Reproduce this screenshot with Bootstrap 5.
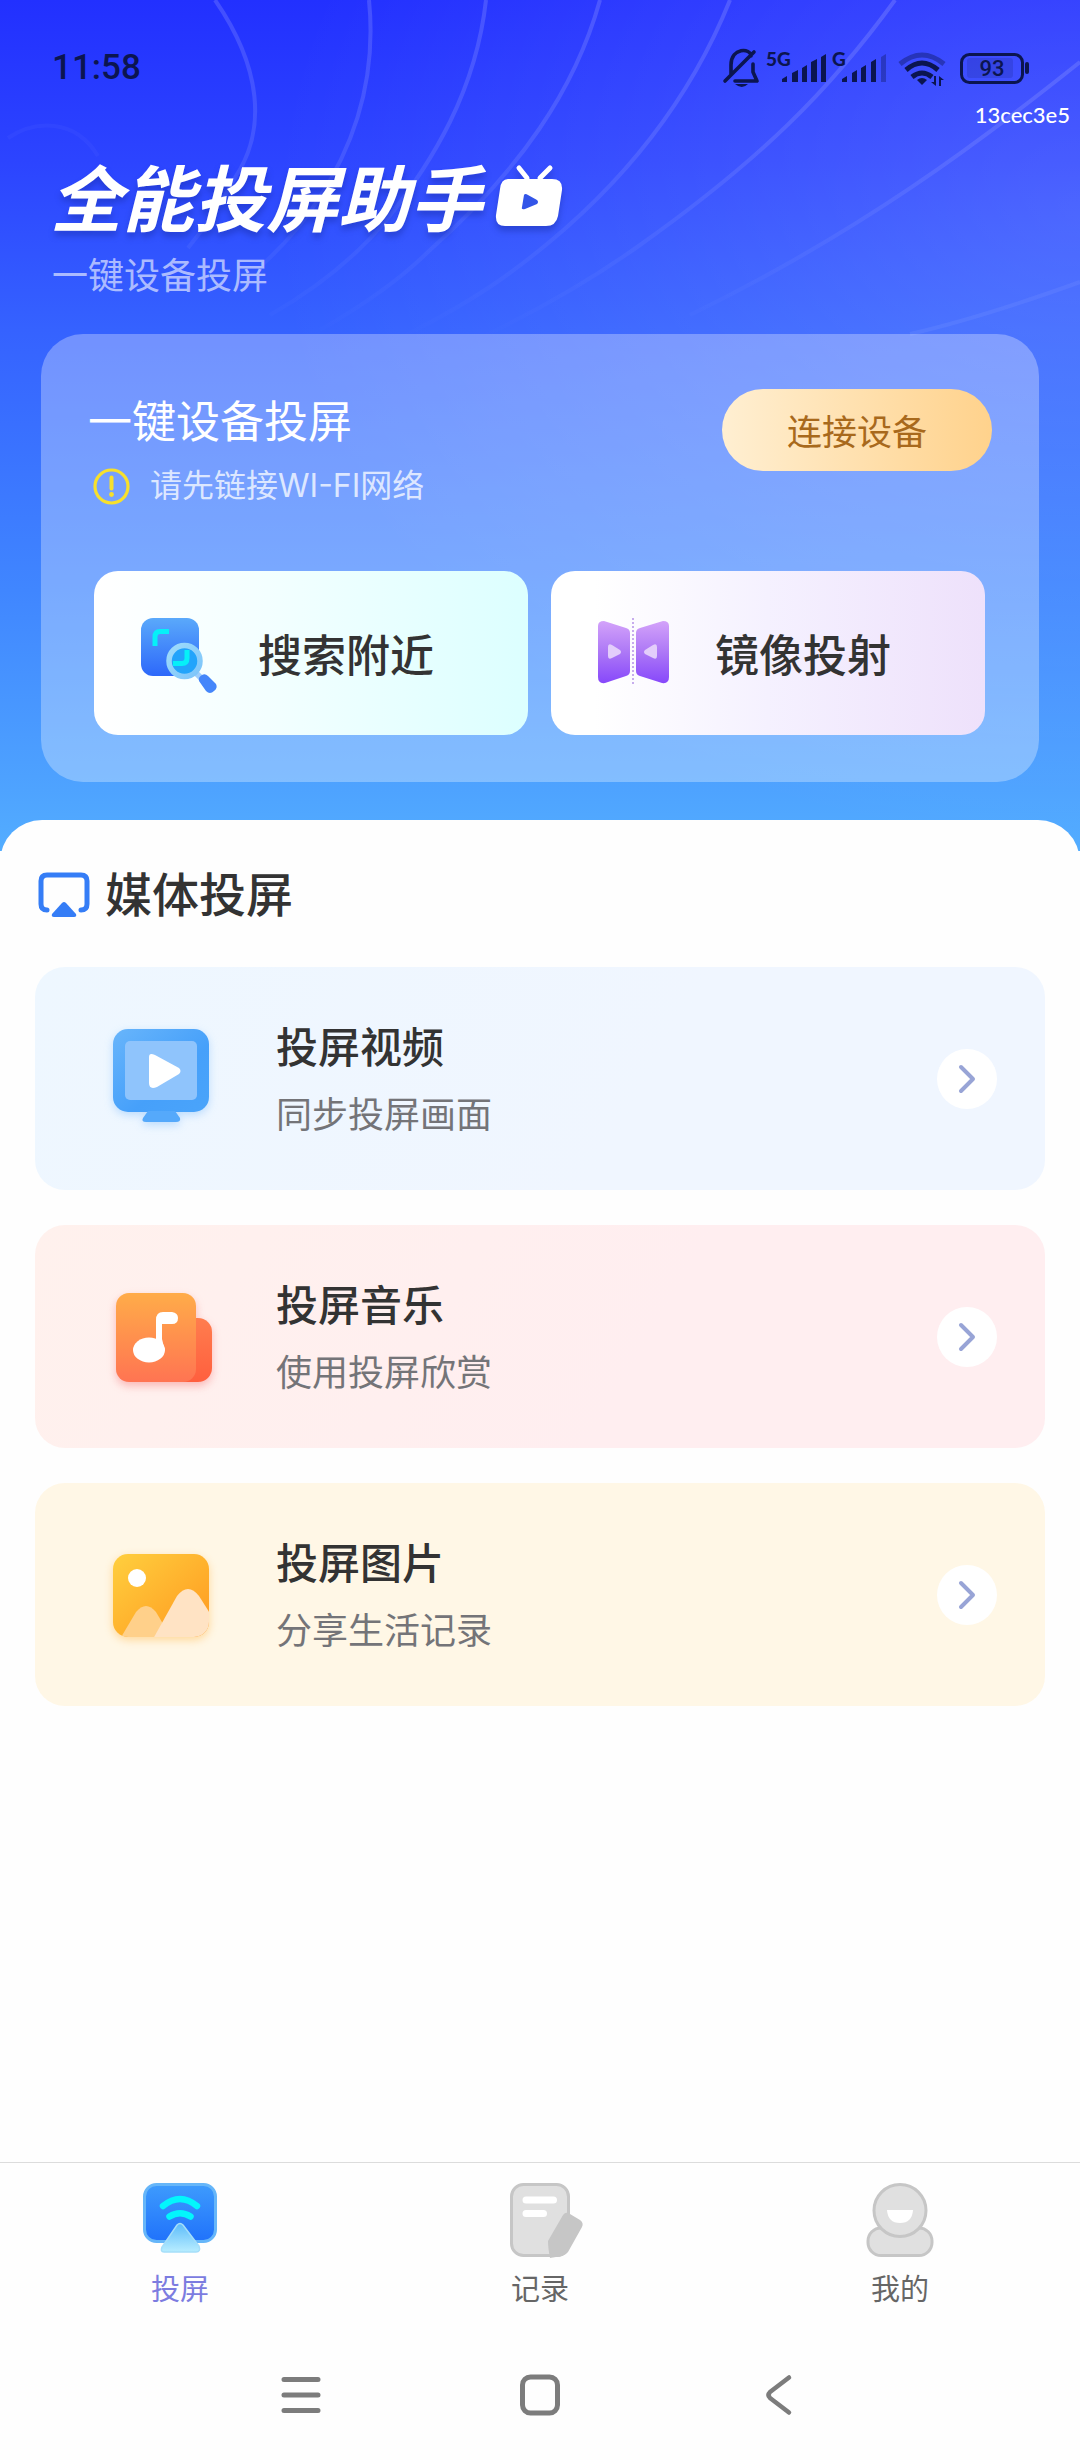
<!DOCTYPE html>
<html lang="zh-CN">
<head>
<meta charset="utf-8">
<meta name="viewport" content="width=device-width, initial-scale=1">
<title>全能投屏助手</title>
<link rel="stylesheet" href="https://cdn.jsdelivr.net/npm/bootstrap@5.3.0/dist/css/bootstrap.min.css">
<script src="https://cdn.jsdelivr.net/npm/bootstrap@5.3.0/dist/js/bootstrap.bundle.min.js"></script>
<style>
body { font-family: "Noto Sans CJK SC", "Noto Sans", sans-serif; color: #333; background: #fefefe; }
svg { display: block; flex: none; overflow: visible; }
a { text-decoration: none; color: inherit; }
button { font-family: inherit; }
.hero { padding-bottom: 69px;
  background: radial-gradient(ellipse 75% 75% at 100% 25%, rgba(255,255,255,.14), transparent), linear-gradient(180deg, #2230ff 0, #2c44ff 160px, #3562ff 330px, #4086ff 590px, #4ea3ff 790px, #53adff 851px); }
.hero-lines { position: absolute; top: 0; left: 0; width: 100%; height: 340px; }
.status-bar { padding: 46px 48px 0 52px; color: #0b1550; }
.clock { font: 500 35px/44px Roboto, sans-serif; }
.build-id { margin-top: 12px; padding-right: 10px; font: 500 22px/26px Lato, sans-serif; }
.brand { margin-top: 31px; padding-left: 50px; gap: 13px; filter: drop-shadow(0 5px 3px rgba(20,40,150,.4)); }
.brand h1 { font-size: 72px; line-height: 72px; font-weight: 700; font-style: italic; }
.tagline { margin-top: 22px; padding-left: 52px; font-size: 36px; line-height: 40px; color: rgba(255,255,255,.6); }
.glass { margin: 41px 41px 0; padding: 55px 0 47px; border-radius: 42px; background: rgba(255,255,255,.3); }
.glass-top { padding: 0 47px; }
.glass-text { padding-top: 6px; }
.glass-text h2 { font-size: 44px; line-height: 48px; font-weight: 400; }
.wifi-tip { margin-top: 23px; padding-left: 5px; gap: 20px; font-family: Inter, "Noto Sans CJK SC", sans-serif; font-size: 32px; line-height: 40px; color: rgba(255,255,255,.76); }
.btn-connect { width: 270px; height: 82px; border: 0; font-size: 35px; line-height: 40px; color: #a8691c; background: linear-gradient(90deg, #ffefd2, #ffd28c); }
.tiles { margin-top: 65px; padding: 0 54px 0 53px; gap: 23px; }
.tile { flex: 1; height: 164px; padding: 0 0 0 47px; gap: 40px; border: 0; border-radius: 24px; font-size: 44px; line-height: 48px; font-weight: 500; color: #333; }
.tile-search { background: linear-gradient(90deg, #fff, #f3ffff 40%, #dcffff); }
.tile-mirror { background: linear-gradient(90deg, #fff 10%, #f5f1ff 50%, #eee1fb); }
.panel { margin-top: -31px; padding: 44px 35px 0; border-radius: 42px 42px 0 0; background: #fefefe; }
.panel-head { padding-left: 3px; gap: 14px; }
.panel-head h2 { font-size: 47px; line-height: 56px; font-weight: 500; }
.media-list { margin-top: 47px; gap: 35px; }
.media-item { height: 223px; padding: 0 48px 0 78px; gap: 67px; border-radius: 30px; }
.media-item h3 { font-size: 42px; line-height: 56px; font-weight: 500; }
.media-item p { margin-top: 11px; font-size: 36px; line-height: 56px; color: #747478; }
.m-video { background: linear-gradient(120deg, #eef7ff, #f0f6ff 60%); }
.m-music { background: linear-gradient(120deg, #fff1ed, #ffeef0 60%); }
.m-photo { background: #fff7e6; }
.go { width: 60px; height: 60px; background: #fff; }
.tab-bar { padding-top: 20px; border-top: 1px solid #dcdcdc; }
.tab-link { gap: 10px; font-size: 29px; line-height: 40px; color: #666; }
.tab-link.active { color: #7c7ce0; }
.sys-nav { padding: 68px 0 45px; gap: 199px; }
.sys-nav button { padding: 0; border: 0; background: none; }
</style>
</head>
<body class="min-vh-100 d-flex flex-column">

<header class="hero position-relative text-white">
  <svg class="hero-lines" viewBox="0 0 1080 340" preserveAspectRatio="none" aria-hidden="true">
    <defs>
      <linearGradient id="fade" gradientUnits="userSpaceOnUse" x1="0" y1="0" x2="0" y2="340"><stop offset="0" stop-color="#fff" stop-opacity=".15"/><stop offset=".4" stop-color="#fff" stop-opacity=".11"/><stop offset="1" stop-color="#fff" stop-opacity="0"/></linearGradient>
    </defs>
    <g fill="none" stroke="url(#fade)" stroke-width="4">
      <path d="M215 0C262 68 266 130 236 176Q215 215 188 248"/>
      <path d="M369 0C375 60 364 130 318 200Q296 234 262 265"/>
      <path d="M486 0C476 90 434 160 385 222Q340 275 270 315"/>
      <path d="M600 0C575 90 520 170 430 250Q390 290 320 330"/>
      <path d="M730 0C690 100 620 195 500 280Q460 308 400 338"/>
      <path d="M895 0C830 90 760 160 640 245Q570 295 480 338"/>
      <path d="M1080 62C980 142 860 232 690 315"/>
      <path d="M1080 282Q980 318 910 334" stroke="#fff" stroke-opacity=".06"/>
      <path d="M8 138C35 120 75 118 98 156" stroke="#fff" stroke-opacity=".03"/>
    </g>
  </svg>

  <div class="status-bar position-relative d-flex justify-content-between align-items-center">
    <span class="clock">11:58</span>
    <svg width="312" height="44" viewBox="720 46 312 44" fill="#0b1550" role="img" aria-label="静音 5G 信号 无线网络 电量 93">
      <g fill="none" stroke="#0b1550" stroke-width="3.6" stroke-linecap="round" stroke-linejoin="round">
        <path d="M731 74V65C731 47 751 48 751 56M753 64V72L757 81H735M725 81L754 52"/>
      </g>
      <path d="M735 84H748Q742 90 735 84Z"/>
      <text x="766" y="66" font-family="Lato, sans-serif" font-weight="900" font-size="19">5G</text>
      <text x="832" y="66" font-family="Lato, sans-serif" font-weight="900" font-size="19">G</text>
      <path d="M782 79l5-3v6h-5zM792 73l6-3v12h-6zM802 68l5-3v17h-5zM811 62l6-3v23h-6zM821 57l5-3v28h-5z"/>
      <path d="M842 79l5-3v6h-5zM852 73l5-3v12h-5zM861 68l5-3v17h-5zM871 62l5-3v23h-5z"/>
      <path d="M881 57l5-3v28h-5z" opacity=".35"/>
      <g fill="none" stroke="#0b1550" stroke-width="5">
        <path d="M900 64Q922 46 944 64" opacity=".4"/>
        <path d="M906 70Q922 56 938 70"/>
        <path d="M912 77Q922 69 932 77"/>
      </g>
      <path d="M917 80Q922 76 927 80L922 85Z"/>
      <path d="M936 76v10l-5-4h3v-6zM939 86V76l5 4h-3v6z"/>
      <rect x="961.500" y="54.500" width="61" height="28" rx="8" fill="none" stroke="#0b1550" stroke-width="3"/>
      <rect x="967" y="58" width="46" height="20" rx="3" opacity=".15"/>
      <rect x="1025" y="62" width="4" height="12" rx="2"/>
      <text x="992" y="76" text-anchor="middle" font-family="Roboto, sans-serif" font-weight="500" font-size="22">93</text>
    </svg>
  </div>
  <div class="build-id position-relative text-end">13cec3e5</div>

  <div class="brand position-relative d-flex align-items-center">
    <h1 class="m-0">全能投屏助手</h1>
    <svg width="68" height="66" viewBox="496 163 68 66" aria-hidden="true">
      <path d="M509 180H553Q564 180 563 191L559 217Q557 227 547 227H506Q496 227 497 216L501 190Q502 180 509 180Z" fill="#fff"/>
      <path d="M520 169L528 179M551 169L541 179" stroke="#fff" stroke-width="5" stroke-linecap="round"/>
      <path d="M525 196Q526 194 529 196L538 201Q540 203 538 205L526 210Q522 211 523 208Z" fill="#3355e8"/>
    </svg>
  </div>
  <p class="tagline position-relative mb-0">一键设备投屏</p>

  <section class="glass position-relative">
    <div class="glass-top d-flex justify-content-between align-items-start">
      <div class="glass-text">
        <h2 class="m-0">一键设备投屏</h2>
        <div class="wifi-tip d-flex align-items-center">
          <svg width="37" height="37" viewBox="0 0 37 37" aria-hidden="true"><circle cx="18.500" cy="18.500" r="16.500" fill="none" stroke="#f7e02c" stroke-width="3.200"/><path d="M18.500 9.500V20.500" stroke="#f7e02c" stroke-width="4" stroke-linecap="round"/><circle cx="18.500" cy="26.500" r="2.400" fill="#f7e02c"/></svg>
          <span>请先链接WI-FI网络</span>
        </div>
      </div>
      <button type="button" class="btn-connect rounded-pill">连接设备</button>
    </div>
    <div class="tiles d-flex">
      <button type="button" class="tile tile-search d-flex align-items-center">
        <svg width="77" height="78" viewBox="141 614 77 78" aria-hidden="true">
          <defs>
            <linearGradient id="sq" x1="0" y1="0" x2="0" y2="1"><stop offset="0" stop-color="#5aa9fb"/><stop offset="1" stop-color="#2d68fa"/></linearGradient>
            <linearGradient id="ring" x1="0" y1="0" x2="1" y2="1"><stop offset="0" stop-color="#9fdcfb"/><stop offset="1" stop-color="#7cc4fa"/></linearGradient>
          </defs>
          <rect x="141" y="618" width="58" height="58" rx="12" fill="url(#sq)"/>
          <path d="M155 646V637Q155 631.500 160 631.500H169" fill="none" stroke="#06f0f8" stroke-width="5"/>
          <path d="M195 672L204 681" stroke="#9ecdfb" stroke-width="6"/>
          <path d="M199 681Q198 677 202 675Q205 673 208 676L216 684Q218 688 214 691Q210 695 206 691Z" fill="#4586fa"/>
          <circle cx="184.500" cy="661" r="15.500" fill="#22a4fb" stroke="url(#ring)" stroke-width="5.500"/>
          <path d="M187 650V658Q187 663.500 182 663.500H173" fill="none" stroke="#06f0f8" stroke-width="5"/>
        </svg>
        <span>搜索附近</span>
      </button>
      <button type="button" class="tile tile-mirror d-flex align-items-center">
        <svg width="77" height="78" viewBox="598 614 77 78" aria-hidden="true">
          <defs><linearGradient id="pur" x1="0" y1="0" x2="0" y2="1"><stop offset="0" stop-color="#d3a2fa"/><stop offset=".5" stop-color="#ad78f6"/><stop offset="1" stop-color="#8748fb"/></linearGradient></defs>
          <path d="M598 626Q598 621 604 621L626 628Q630 629 630 633V671Q630 675 626 676L605 683Q598 684 598 677Z" fill="url(#pur)"/>
          <path d="M669 626Q669 621 663 621L640 628Q636 629 636 633V671Q636 675 640 676L662 683Q669 684 669 677Z" fill="url(#pur)"/>
          <path d="M633 618V686" stroke="#b592e8" stroke-width="1.500" stroke-dasharray="2 2"/>
          <path d="M608 647Q608 643 612 645L620 650Q622 652 620 654L612 658Q608 660 608 656Z" fill="#e3cdfb"/>
          <path d="M657 647Q657 643 653 645L645 650Q643 652 645 654L653 658Q657 660 657 656Z" fill="#e3cdfb"/>
        </svg>
        <span>镜像投射</span>
      </button>
    </div>
  </section>
</header>

<main class="panel position-relative">
  <div class="panel-head d-flex align-items-center">
    <svg width="53" height="46" viewBox="0 -3 53 46" aria-hidden="true"><path d="M9 38Q3 38 3 32V9Q3 3 9 3H43Q49 3 49 9V32Q49 38 43 38" fill="none" stroke="#357df6" stroke-width="5" stroke-linecap="round"/><path d="M24 31Q26 29 28 31L38 42Q39 45 36 45H16Q13 45 14 42Z" fill="#357df6"/></svg>
    <h2 class="m-0">媒体投屏</h2>
  </div>
  <nav class="media-list d-flex flex-column" aria-label="媒体投屏">
    <a href="#video" class="media-item m-video d-flex align-items-center">
      <svg width="96" height="96" viewBox="113 1030 96 96" aria-hidden="true">
        <defs><linearGradient id="mon" x1="0" y1="0" x2="1" y2="1"><stop offset="0" stop-color="#68b5fb"/><stop offset=".6" stop-color="#46a0fa"/><stop offset="1" stop-color="#4aa4fa"/></linearGradient></defs>
        <g style="filter:drop-shadow(0 3px 4px rgba(70,160,250,.3))">
          <rect x="113" y="1028" width="96" height="83" rx="15" fill="url(#mon)"/>
          <path d="M148 1110H175L180 1117Q181 1121 176 1121H146Q141 1121 143 1117Z" fill="#55a9fb"/>
        </g>
        <rect x="125" y="1040" width="72" height="59" rx="5" fill="#8fc4fc"/>
        <path d="M149 1056Q149 1051 155 1054L179 1067Q182 1070 179 1073L157 1086Q149 1089 149 1082Z" fill="#fff"/>
      </svg>
      <div class="flex-grow-1"><h3 class="m-0">投屏视频</h3><p class="mb-0">同步投屏画面</p></div>
      <span class="go rounded-circle d-flex align-items-center justify-content-center"><svg width="16" height="28" viewBox="0 0 16 28" aria-hidden="true"><path d="M2 2L14 14L2 26" fill="none" stroke="#98a4d6" stroke-width="4" stroke-linecap="round" stroke-linejoin="round"/></svg></span>
    </a>
    <a href="#music" class="media-item m-music d-flex align-items-center">
      <svg width="96" height="96" viewBox="113 1288 96 96" aria-hidden="true">
        <defs>
          <linearGradient id="mus" x1="0" y1="0" x2="0" y2="1"><stop offset="0" stop-color="#ffac49"/><stop offset="1" stop-color="#ff7452"/></linearGradient>
          <linearGradient id="mus2" x1="0" y1="0" x2="0" y2="1"><stop offset="0" stop-color="#ff7d4e"/><stop offset="1" stop-color="#ff5f3e"/></linearGradient>
        </defs>
        <g style="filter:drop-shadow(0 4px 4px rgba(240,80,80,.35))">
          <rect x="160" y="1317" width="52" height="64" rx="14" fill="url(#mus2)"/>
          <rect x="116" y="1292" width="80" height="89" rx="13" fill="url(#mus)"/>
        </g>
        <ellipse cx="149" cy="1349" rx="16" ry="12.500" fill="#fff"/>
        <path d="M156 1319Q156 1311 163 1311H172Q178 1312 178 1317Q178 1323 172 1323H162V1338L165 1350L156 1342Z" fill="#fff"/>
      </svg>
      <div class="flex-grow-1"><h3 class="m-0">投屏音乐</h3><p class="mb-0">使用投屏欣赏</p></div>
      <span class="go rounded-circle d-flex align-items-center justify-content-center"><svg width="16" height="28" viewBox="0 0 16 28" aria-hidden="true"><path d="M2 2L14 14L2 26" fill="none" stroke="#98a4d6" stroke-width="4" stroke-linecap="round" stroke-linejoin="round"/></svg></span>
    </a>
    <a href="#photo" class="media-item m-photo d-flex align-items-center">
      <svg width="96" height="96" viewBox="113 1546 96 96" aria-hidden="true">
        <defs>
          <linearGradient id="pic" x1="0" y1="0" x2="1" y2="1"><stop offset="0" stop-color="#ffcf3e"/><stop offset="1" stop-color="#ff981f"/></linearGradient>
          <clipPath id="picclip"><rect x="113" y="1553" width="96" height="83" rx="15"/></clipPath>
        </defs>
        <rect x="113" y="1553" width="96" height="83" rx="15" fill="url(#pic)" style="filter:drop-shadow(0 3px 4px rgba(255,170,40,.4))"/>
        <g clip-path="url(#picclip)">
          <path d="M120 1638L136 1611Q146 1599 156 1611L172 1638Z" fill="#ffd08a"/>
          <path d="M153 1638L177 1595Q188 1581 199 1595L218 1625V1638Z" fill="#ffe3c4"/>
        </g>
        <circle cx="137" cy="1577" r="9" fill="#fff"/>
      </svg>
      <div class="flex-grow-1"><h3 class="m-0">投屏图片</h3><p class="mb-0">分享生活记录</p></div>
      <span class="go rounded-circle d-flex align-items-center justify-content-center"><svg width="16" height="28" viewBox="0 0 16 28" aria-hidden="true"><path d="M2 2L14 14L2 26" fill="none" stroke="#98a4d6" stroke-width="4" stroke-linecap="round" stroke-linejoin="round"/></svg></span>
    </a>
  </nav>
</main>

<footer class="mt-auto">
  <nav class="tab-bar row g-0" aria-label="主导航">
    <a href="#cast" class="tab-link active col d-flex flex-column align-items-center">
      <svg width="90" height="74" viewBox="135 2183 90 74" aria-hidden="true">
        <defs>
          <linearGradient id="tv" x1="0" y1="0" x2="0" y2="1"><stop offset="0" stop-color="#3e9bfd"/><stop offset="1" stop-color="#2072fb"/></linearGradient>
          <linearGradient id="tri" x1="0" y1="0" x2="0" y2="1"><stop offset="0" stop-color="#5cbcfa"/><stop offset="1" stop-color="#b8edff"/></linearGradient>
        </defs>
        <rect x="144.500" y="2184.500" width="71" height="57" rx="12" fill="url(#tv)" stroke="#66b6f9" stroke-width="3"/>
        <path d="M163 2206Q180 2192 197 2206M169.500 2216.500Q180 2210 190.500 2216.500" fill="none" stroke="#03f6fc" stroke-width="6.500" stroke-linecap="round"/>
        <path d="M177 2225Q180 2222 183 2225L199 2246Q201 2252 196 2252H164Q160 2252 162 2247Z" fill="url(#tri)" stroke="#a5def9" stroke-width="1.500"/>
      </svg>
      <span>投屏</span>
    </a>
    <a href="#records" class="tab-link col d-flex flex-column align-items-center">
      <svg width="90" height="74" viewBox="495 2183 90 74" aria-hidden="true">
        <rect x="511.500" y="2184.500" width="57" height="71" rx="12" fill="#e0e0e0" stroke="#c6c6c6" stroke-width="3"/>
        <path d="M526 2200H553.500M526 2213.500H543.500" stroke="#fff" stroke-width="7" stroke-linecap="round"/>
        <path d="M563 2215Q566 2211 570 2214L580 2220Q584 2223 582 2227L568 2252Q564 2257 556 2257L550 2258Q548 2248 548 2241Z" fill="#c6c6c6"/>
      </svg>
      <span>记录</span>
    </a>
    <a href="#mine" class="tab-link col d-flex flex-column align-items-center">
      <svg width="90" height="74" viewBox="855 2183 90 74" aria-hidden="true" fill="#e0e0e0" stroke="#c6c6c6" stroke-width="3">
        <rect x="868" y="2228" width="64" height="27.500" rx="13"/>
        <circle cx="900" cy="2210.500" r="26"/>
        <path d="M887 2210H913Q912 2223 900 2223Q888 2223 887 2210Z" fill="#fff" stroke="none"/>
      </svg>
      <span>我的</span>
    </a>
  </nav>
  <div class="sys-nav d-flex justify-content-center">
    <button type="button" aria-label="最近任务"><svg width="40" height="40" viewBox="0 0 40 40"><path d="M3 4.500H37M3 20H37M3 35.500H37" stroke="#7c7c7c" stroke-width="5" stroke-linecap="round"/></svg></button>
    <button type="button" aria-label="主页"><svg width="40" height="40" viewBox="0 0 40 40"><rect x="2.500" y="2" width="35" height="36" rx="8" fill="none" stroke="#7c7c7c" stroke-width="5"/></svg></button>
    <button type="button" aria-label="返回"><svg width="40" height="40" viewBox="0 0 40 40"><path d="M30 2.500L11 17Q8 20 11 23L30 37.500" fill="none" stroke="#7c7c7c" stroke-width="4.500" stroke-linecap="round" stroke-linejoin="round"/></svg></button>
  </div>
</footer>
</body>
</html>
